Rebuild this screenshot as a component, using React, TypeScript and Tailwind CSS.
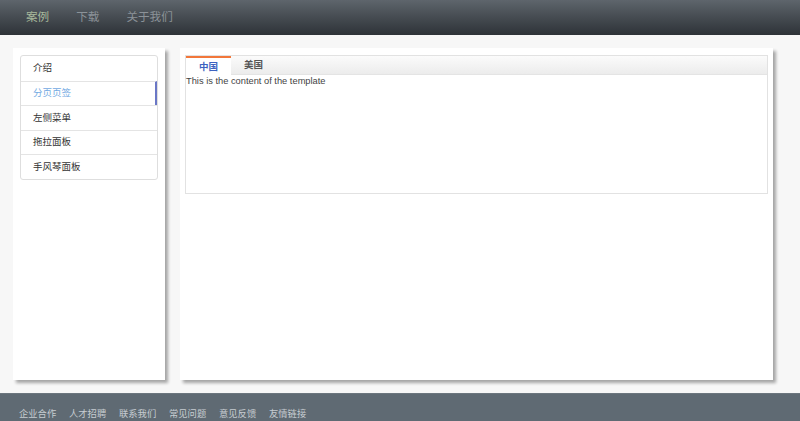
import React, { useState } from 'react';

const navItems = ['案例', '下载', '关于我们'];
const menuItems = ['介绍', '分页页签', '左侧菜单', '拖拉面板', '手风琴面板'];
const footerLinks = ['企业合作', '人才招聘', '联系我们', '常见问题', '意见反馈', '友情链接'];
const tabs = ['中国', '美国'];

export default function App() {
  const [activeMenu, setActiveMenu] = useState(1);
  const [activeTab, setActiveTab] = useState(0);

  return (
    <div
      className="flex h-[421px] w-[800px] flex-col overflow-hidden bg-[#f7f7f7]"
      style={{ fontFamily: '"Liberation Sans", "Noto Sans CJK SC", sans-serif' }}
    >
      {/* top nav */}
      <div className="flex h-[35px] shrink-0 items-center gap-[27px] bg-gradient-to-b from-[#5e656c] to-[#2e3338] pl-[26px] pb-[2px]">
        {navItems.map((n, i) => (
          <span
            key={n}
            className={`text-[11.6px] ${i === 0 ? 'text-[#a9ba9c]' : 'text-[#8b9298]'}`}
          >
            {n}
          </span>
        ))}
      </div>

      {/* body */}
      <div className="flex h-[358px] shrink-0 gap-[15px] pl-[13px] pr-[27px] pt-[13px] pb-[13px]">
        <div className="w-[152px] bg-white p-[7px] shadow-[3px_3px_3px_rgba(0,0,0,0.33)]">
          <div className="w-[138px] overflow-hidden rounded-[3px] border border-[#dedede]">
            {menuItems.map((m, i) => (
              <div
                key={m}
                onClick={() => setActiveMenu(i)}
                className={`flex h-[24.6px] cursor-pointer items-center pl-[12px] text-[9.5px] ${
                  i > 0 ? 'border-t border-[#e4e4e4]' : ''
                } ${
                  activeMenu === i
                    ? 'border-r-2 border-r-[#6a77c6] text-[#72a9e2]'
                    : 'text-[#333]'
                }`}
              >
                {m}
              </div>
            ))}
          </div>
        </div>

        <div className="flex-1 bg-white p-[5px] pt-[7px] shadow-[3px_3px_3px_rgba(0,0,0,0.33)]">
          <div className="h-[139px] border border-[#e2e2e2]">
            <div className="flex h-[19px] border-b border-[#e4e4e4] bg-gradient-to-b from-[#fbfbfb] to-[#ececec]">
              {tabs.map((t, i) => (
                <div
                  key={t}
                  onClick={() => setActiveTab(i)}
                  className={`flex w-[45px] cursor-pointer items-center justify-center text-[9.5px] font-bold ${
                    activeTab === i
                      ? 'h-[20px] border-t-2 border-[#f2773a] bg-white text-[#3c62c0]'
                      : 'text-[#555]'
                  }`}
                >
                  {t}
                </div>
              ))}
            </div>
            <div className="text-[9.3px] leading-[12px] text-[#444]">
              This is the content of the template
            </div>
          </div>
        </div>
      </div>

      {/* footer */}
      <div className="flex flex-1 items-start gap-[6px] border-t border-[#6c767e] bg-[#5f6a73] pl-[19px] pt-[14px]">
        {footerLinks.map((f) => (
          <span key={f} className="w-[44px] text-[9.3px] text-[#c6ccd1]">
            {f}
          </span>
        ))}
      </div>
    </div>
  );
}
